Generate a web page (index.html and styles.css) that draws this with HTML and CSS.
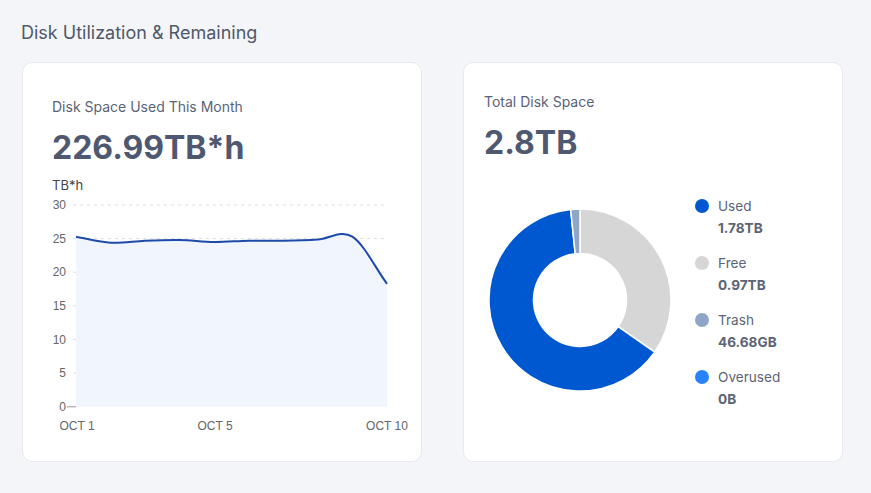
FILE: index.html
```html
<!DOCTYPE html>
<html>
<head>
<meta charset="utf-8">
<link rel="stylesheet" href="styles.css">
</head>
<body>
<div class="page">
  <h2 class="title">Disk Utilization &amp; Remaining</h2>
  <div class="cards">
    <section class="card card-usage">
      <div class="label">Disk Space Used This Month</div>
      <div class="big">226.99TB*h</div>
      <div class="unit">TB*h</div>
      <svg class="chart" width="365" height="240" viewBox="0 0 365 240">
        <g class="grid">
          <line x1="21" y1="9" x2="335" y2="9"/>
          <line x1="21" y1="42.6" x2="335" y2="42.6"/>
          <line x1="21" y1="76.2" x2="335" y2="76.2"/>
          <line x1="21" y1="109.8" x2="335" y2="109.8"/>
          <line x1="21" y1="143.5" x2="335" y2="143.5"/>
          <line x1="21" y1="177.1" x2="335" y2="177.1"/>
        </g>
        <path class="area" d="M24 40.7 C35.5 42.7 47.1 46 58.6 46.7 C70.1 47.4 81.6 45.15 93.1 44.7 C104.6 44.25 116.2 43.8 127.7 44 C139.2 44.2 150.7 45.9 162.2 46 C173.7 46.1 185.3 44.9 196.8 44.7 C208.3 44.5 219.8 44.9 231.3 44.7 C242.8 44.5 254.4 44.2 265.9 43.5 C277.4 42.8 288.9 33.3 300.4 40.7 C311.9 48.1 323.5 72.1 335 87.8 L335 210.8 L24 210.8 Z"/>
        <path class="line" d="M24 40.7 C35.5 42.7 47.1 46 58.6 46.7 C70.1 47.4 81.6 45.15 93.1 44.7 C104.6 44.25 116.2 43.8 127.7 44 C139.2 44.2 150.7 45.9 162.2 46 C173.7 46.1 185.3 44.9 196.8 44.7 C208.3 44.5 219.8 44.9 231.3 44.7 C242.8 44.5 254.4 44.2 265.9 43.5 C277.4 42.8 288.9 33.3 300.4 40.7 C311.9 48.1 323.5 72.1 335 87.8"/>
        <line class="tick" x1="15" y1="210.8" x2="24" y2="210.8"/>
        <g class="ylab">
          <text x="14" y="13">30</text>
          <text x="14" y="46.6">25</text>
          <text x="14" y="80.2">20</text>
          <text x="14" y="113.8">15</text>
          <text x="14" y="147.5">10</text>
          <text x="14" y="181.1">5</text>
          <text x="14" y="214.8">0</text>
        </g>
        <g class="xlab">
          <text x="25" y="233.5">OCT 1</text>
          <text x="163" y="233.5">OCT 5</text>
          <text x="335" y="233.5">OCT 10</text>
        </g>
      </svg>
    </section>
    <section class="card card-total">
      <div class="label">Total Disk Space</div>
      <div class="big">2.8TB</div>
      <div class="donut-row">
        <svg class="donut" width="184" height="184" viewBox="0 0 184 184">
          <path class="seg-free" d="M92 1 A91 91 0 0 1 166.64 144.06 L130.14 118.6 A46.5 46.5 0 0 0 92 45.5 Z"/>
          <path class="seg-used" d="M166.64 144.06 A91 91 0 1 1 82.65 1.48 L87.22 45.75 A46.5 46.5 0 1 0 130.14 118.6 Z"/>
          <path class="seg-trash" d="M82.65 1.48 A91 91 0 0 1 92 1 L92 45.5 A46.5 46.5 0 0 0 87.22 45.75 Z"/>
        </svg>
        <ul class="legend">
          <li class="item"><span class="name"><i class="dot dot-used"></i>Used</span><b class="val">1.78TB</b></li>
          <li class="item"><span class="name"><i class="dot dot-free"></i>Free</span><b class="val">0.97TB</b></li>
          <li class="item"><span class="name"><i class="dot dot-trash"></i>Trash</span><b class="val">46.68GB</b></li>
          <li class="item"><span class="name"><i class="dot dot-over"></i>Overused</span><b class="val">0B</b></li>
        </ul>
      </div>
    </section>
  </div>
</div>
</body>
</html>
```

FILE: styles.css
```css
* { box-sizing: border-box; }
html, body {
  margin: 0;
  padding: 0;
  background: #f4f5f9;
  font-family: Inter, "Noto Sans", sans-serif;
}
.page {
  padding: 21px 22px 0 22px;
}
.title {
  margin: 0 0 17px -1px;
  font-size: 18px;
  line-height: 24px;
  font-weight: 400;
  color: #4f586a;
}
.cards {
  display: grid;
  grid-template-columns: 400px 380px;
  column-gap: 41px;
}
.card {
  height: 400px;
  background: #fff;
  border: 1px solid #e7e9ee;
  border-radius: 10px;
  display: flex;
  flex-direction: column;
}
.card-usage { padding: 36px 0 0 29px; }
.card-total { padding: 31px 0 0 20px; }
.label {
  font-size: 14px;
  line-height: 16px;
  color: #5a6376;
}
.big {
  margin-top: 13px;
  font-size: 32px;
  line-height: 40px;
  font-weight: 700;
  color: #4e5870;
}
.unit {
  margin-top: 10px;
  font-size: 13px;
  line-height: 15px;
  color: #444;
}
.chart {
  display: block;
  margin-top: 3px;
}
.grid line {
  stroke: #dedede;
  stroke-width: 1;
  stroke-dasharray: 3 4;
}
.area { fill: #f1f5fd; }
.line {
  fill: none;
  stroke: #1f4ba8;
  stroke-width: 2;
}
.tick { stroke: #999; stroke-width: 1; }
.ylab text {
  font-family: "Liberation Sans", Arial, sans-serif;
  font-size: 12px;
  fill: #666;
  text-anchor: end;
}
.xlab text {
  font-family: "Liberation Sans", Arial, sans-serif;
  font-size: 12px;
  fill: #666;
  text-anchor: middle;
}
.donut-row {
  display: flex;
  align-items: flex-start;
  margin-top: 32px;
}
.donut {
  display: block;
  margin: 13px 0 0 4px;
  flex: none;
}
.donut path { stroke: #fff; stroke-width: 1.5; }
.seg-free { fill: #d6d6d6; }
.seg-used { fill: #0058d0; }
.seg-trash { fill: #8fa6c6; }
.legend {
  list-style: none;
  margin: 2px 0 0 23px;
  padding: 0;
  display: flex;
  flex-direction: column;
  gap: 17px;
}
.item {
  display: flex;
  flex-direction: column;
  gap: 4px;
}
.name {
  display: flex;
  align-items: center;
  font-size: 13.6px;
  line-height: 18px;
  color: #5b6476;
}
.dot {
  width: 14px;
  height: 14px;
  border-radius: 50%;
  margin-right: 9px;
  flex: none;
}
.dot-used { background: #0058d0; }
.dot-free { background: #d6d6d6; }
.dot-trash { background: #8fa6c6; }
.dot-over { background: #2a82fa; }
.val {
  padding-left: 23px;
  font-size: 13.6px;
  line-height: 18px;
  font-weight: 700;
  color: #5b6476;
}
```
